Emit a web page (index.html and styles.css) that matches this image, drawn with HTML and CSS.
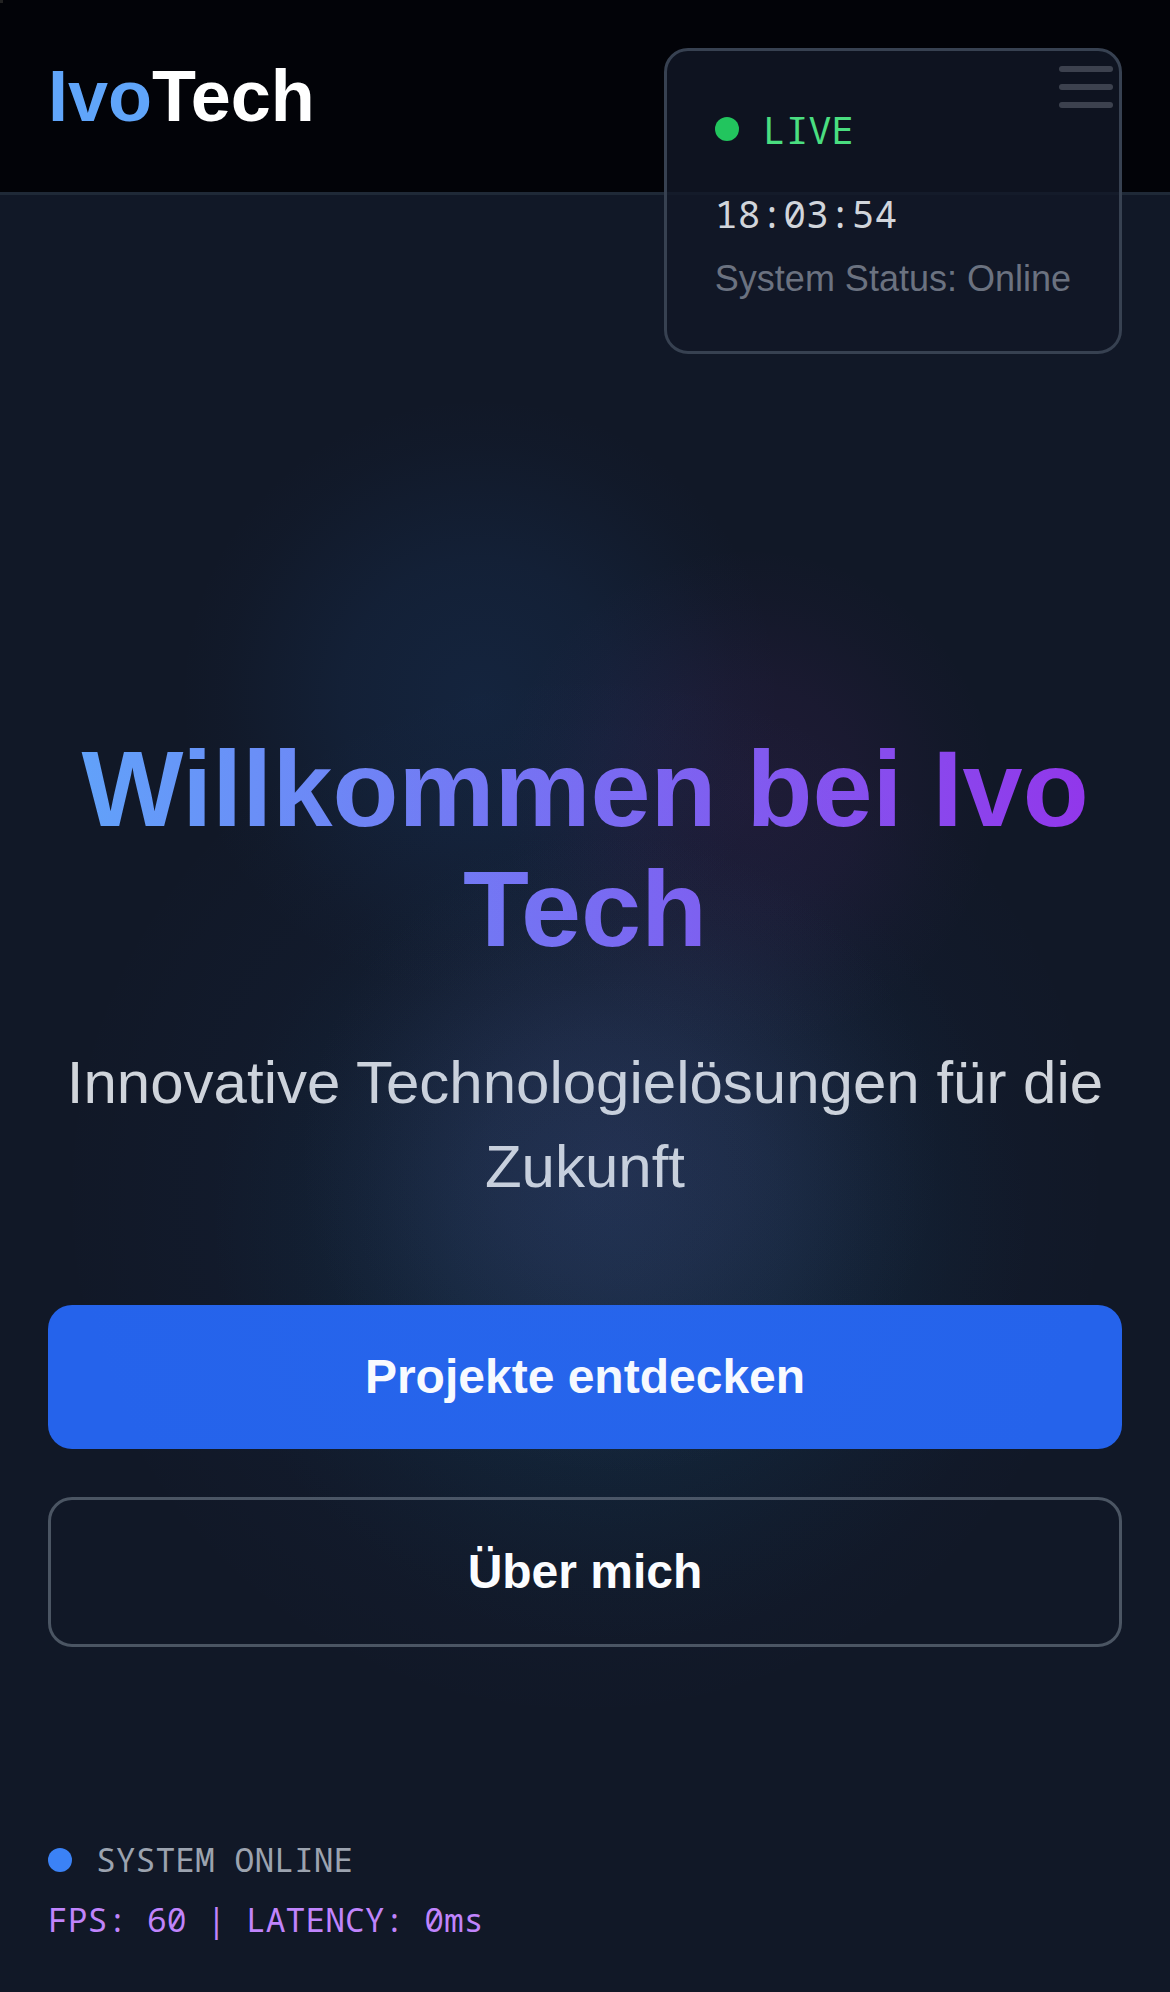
FILE: index.html
```html
<!DOCTYPE html>
<html lang="de">
<head>
<meta charset="utf-8">
<meta name="viewport" content="width=device-width, initial-scale=1">
<title>IvoTech</title>
<link rel="stylesheet" href="styles.css">
</head>
<body>
<div class="page">
  <header class="header">
    <a class="logo" href="#"><span class="logo-accent">Ivo</span>Tech</a>
    <button class="menu" type="button" aria-label="Menü">
      <span class="menu-bar"></span>
      <span class="menu-bar"></span>
      <span class="menu-bar"></span>
    </button>
  </header>

  <aside class="panel">
    <div class="live"><span class="dot dot-green"></span><span>LIVE</span></div>
    <time class="clock">18:03:54</time>
    <p class="status">System Status: Online</p>
  </aside>

  <main class="hero">
    <h1 class="title">Willkommen bei Ivo Tech</h1>
    <p class="subtitle">Innovative Technologielösungen für die Zukunft</p>
    <div class="actions">
      <a class="button button-primary" href="#projekte">Projekte entdecken</a>
      <a class="button button-outline" href="#about">Über mich</a>
    </div>
  </main>

  <footer class="system">
    <div class="system-row"><span class="dot dot-blue"></span><span>SYSTEM ONLINE</span></div>
    <p class="metrics">FPS: 60 | LATENCY: 0ms</p>
  </footer>

  <div class="glow" aria-hidden="true"></div>
  <div class="cursor" aria-hidden="true"></div>
</div>
</body>
</html>
```
FILE: styles.css
```css
* {
  box-sizing: border-box;
}

body {
  margin: 0;
  background: #111827;
  color: #fff;
  font-family: "Liberation Sans", Arial, sans-serif;
}

p,
h1 {
  margin: 0;
}

a {
  color: inherit;
  text-decoration: none;
}

/* The page background carries the blurred colour spots */
.page {
  position: relative;
  display: flex;
  flex-direction: column;
  min-height: 100vh;
  overflow: hidden;
  background:
    radial-gradient(circle 320px at 53% 58%, rgba(110, 80, 150, 0.17), rgba(110, 80, 150, 0.12) 40%, rgba(110, 80, 150, 0.03) 80%, transparent),
    radial-gradient(circle 410px at 53% 62%, rgba(20, 110, 140, 0.15), rgba(20, 110, 140, 0.12) 40%, rgba(20, 110, 140, 0.03) 80%, transparent),
    radial-gradient(circle 250px at 64% 40%, rgba(147, 51, 180, 0.1), rgba(147, 51, 180, 0.07) 45%, rgba(147, 51, 180, 0.02) 80%, transparent),
    radial-gradient(circle 300px at 41% 35%, rgba(37, 99, 180, 0.16), rgba(37, 99, 180, 0.11) 45%, rgba(37, 99, 180, 0.02) 85%, transparent);
}

/* Header */
.header {
  display: flex;
  align-items: center;
  justify-content: space-between;
  padding: 48px;
  background: #020308;
  border-bottom: 3px solid #1f2937;
}

.logo {
  font-size: 72px;
  line-height: 96px;
  font-weight: 700;
}

.logo-accent {
  color: #60a5fa;
}

.menu {
  display: flex;
  flex-direction: column;
  gap: 12px;
  width: 72px;
  height: 72px;
  padding: 6px 9px;
  border: 0;
  background: none;
}

.menu-bar {
  height: 6px;
  border-radius: 3px;
  background: #e5e7eb;
}

/* Live panel floating over the header */
.panel {
  position: absolute;
  top: 48px;
  right: 48px;
  padding: 48px;
  border: 3px solid #374151;
  border-radius: 24px;
  background: rgba(17, 24, 39, 0.8);
}

.live,
.clock,
.system {
  font-family: "Noto Sans Mono", "DejaVu Sans Mono", monospace;
}

.live {
  display: flex;
  align-items: center;
  gap: 24px;
  margin-bottom: 24px;
  color: #4ade80;
  font-size: 38px;
  line-height: 60px;
}

.clock {
  display: block;
  color: #d1d5db;
  font-size: 38px;
  line-height: 60px;
}

.status {
  margin-top: 12px;
  color: #6b7280;
  font-size: 36px;
  line-height: 48px;
}

.dot {
  width: 24px;
  height: 24px;
  border-radius: 50%;
}

.dot-green {
  background: #22c55e;
}

.dot-blue {
  background: #3b82f6;
}

/* Hero */
.hero {
  display: flex;
  flex: 1;
  flex-direction: column;
  justify-content: center;
  padding: 345px 48px 0;
  text-align: center;
}

.title {
  margin-bottom: 72px;
  background: linear-gradient(to right, #60a5fa, #9333ea);
  -webkit-background-clip: text;
  background-clip: text;
  color: transparent;
  font-size: 108px;
  line-height: 120px;
  font-weight: 700;
}

.subtitle {
  margin-bottom: 96px;
  color: #d1d5db;
  font-size: 60px;
  line-height: 84px;
}

.actions {
  display: flex;
  flex-direction: column;
  gap: 48px;
}

.button {
  padding: 36px 96px;
  border-radius: 24px;
  font-size: 48px;
  line-height: 72px;
  font-weight: 700;
}

.button-primary {
  background: #2563eb;
}

.button-outline {
  border: 3px solid #4b5563;
}

/* System readout */
.system {
  padding: 0 48px 48px;
  font-size: 33px;
  line-height: 48px;
}

.system-row {
  display: flex;
  align-items: center;
  gap: 24px;
  color: #9ca3af;
}

.metrics {
  margin-top: 12px;
  color: #c084fc;
}

/* Faint light over the content */
.glow {
  position: absolute;
  inset: 0;
  pointer-events: none;
  background: radial-gradient(circle 530px at 50% 60%, rgba(59, 130, 246, 0.08), rgba(59, 130, 246, 0.03) 55%, transparent);
}

.cursor {
  position: absolute;
  top: 0;
  left: 0;
  width: 3px;
  height: 3px;
  background: #222;
}
```
